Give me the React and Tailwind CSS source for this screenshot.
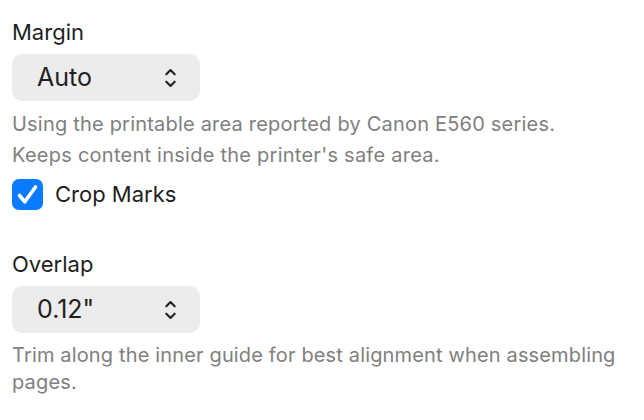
import React, { useState } from 'react';

function Chevrons() {
  return (
    <svg width="13" height="22" viewBox="0 0 13 22" fill="none" stroke="#222" strokeWidth="2.1" strokeLinecap="round" strokeLinejoin="round">
      <path d="M2.3 7.3 L6.5 3 L10.7 7.3" />
      <path d="M2.3 14.7 L6.5 19 L10.7 14.7" />
    </svg>
  );
}

function PopUp({ value }) {
  return (
    <button className="flex h-[47px] w-[188px] items-center justify-between rounded-[10px] bg-[#ececec] pl-[25px] pr-[23px] text-[25px] text-[#1f1f1f]">
      <span>{value}</span>
      <Chevrons />
    </button>
  );
}

export default function App() {
  const [cropMarks, setCropMarks] = useState(true);

  return (
    <div className="min-h-screen bg-white px-3 pt-[18px] text-[#1f1f1f]" style={{ fontFamily: 'Inter, "Noto Sans", sans-serif' }}>
      {/* Margin */}
      <div className="text-[22px] leading-[28px]">Margin</div>
      <div className="mt-[8px]">
        <PopUp value="Auto" />
      </div>
      <p className="mt-[11px] text-[20px] leading-[24px] tracking-[0.2px] text-[#808080]">
        Using the printable area reported by Canon E560 series.
      </p>
      <p className="mt-[7px] text-[20px] leading-[24px] tracking-[0.25px] text-[#808080]">
        Keeps content inside the printer's safe area.
      </p>
      <label className="mt-[11px] flex items-center gap-[12px]">
        <span
          onClick={() => setCropMarks(!cropMarks)}
          className="flex h-[31px] w-[31px] items-center justify-center rounded-[7px] bg-[#0a7aff]"
        >
          {cropMarks && (
            <svg width="31" height="31" viewBox="0 0 31 31" fill="none" stroke="white" strokeWidth="3.6" strokeLinecap="round" strokeLinejoin="round">
              <path d="M7.5 16.5 L12.8 22.8 L23.5 8" />
            </svg>
          )}
        </span>
        <span className="text-[22px]">Crop Marks</span>
      </label>

      {/* Overlap */}
      <div className="mt-[39px] text-[22px] leading-[28px]">Overlap</div>
      <div className="mt-[8px]">
        <PopUp value={'0.12"'} />
      </div>
      <p className="mt-[9px] w-[620px] text-[20px] leading-[27px] tracking-[0.15px] text-[#808080]">
        Trim along the inner guide for best alignment when assembling pages.
      </p>
    </div>
  );
}
